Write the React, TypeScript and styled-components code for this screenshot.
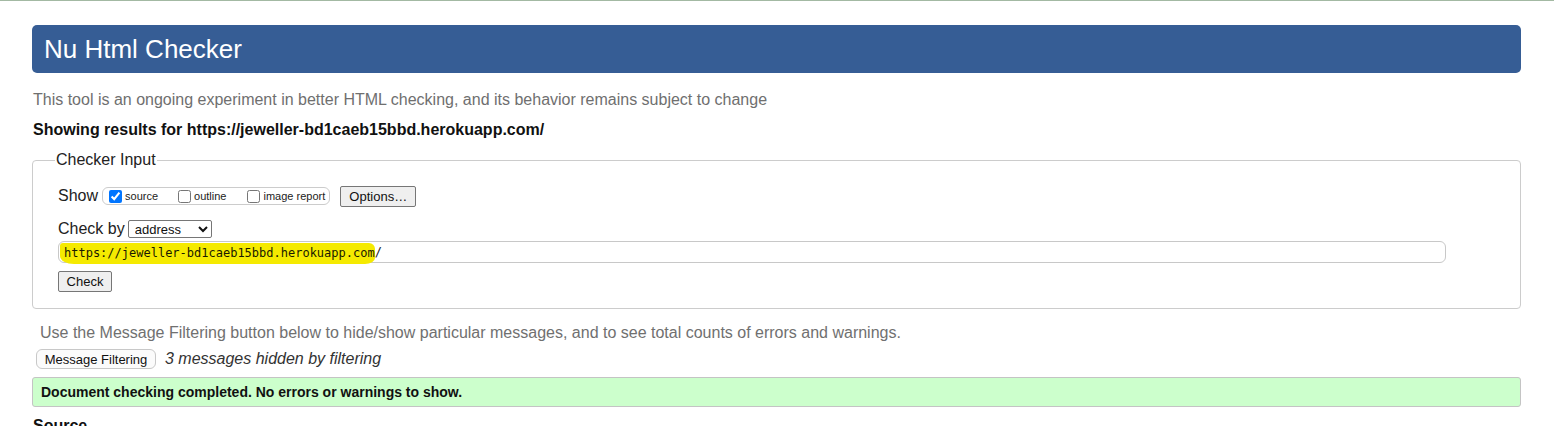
import React from "react";
import styled, { createGlobalStyle } from "styled-components";

const Global = createGlobalStyle`
  html, body { margin: 0; padding: 0; background: #fff; }
  body { font-family: "Liberation Sans", Arial, sans-serif; color: #000; overflow: hidden; }
`;

const TopRule = styled.div`
  height: 1px;
  background: #a3b9a3;
`;

const Page = styled.div`
  width: 1489px;
  margin: 0 0 0 32px;
  padding-top: 24px;
`;

const Header = styled.h1`
  margin: 0;
  height: 48px;
  box-sizing: border-box;
  padding: 0 12px;
  display: flex;
  align-items: center;
  background: #365d95;
  border-radius: 5px;
  color: #fff;
  font-weight: normal;
  font-size: 26px;
`;

const Intro = styled.p`
  margin: 17px 0 0 1px;
  font-size: 16px;
  line-height: 20px;
  color: #6f6f6f;
`;

const Results = styled.p`
  margin: 10px 0 0 1px;
  font-size: 16px;
  font-weight: bold;
  line-height: 19px;
  color: #111;
`;

const Fieldset = styled.fieldset`
  margin: 12px 0 0 0;
  padding: 12px 25px 16px 25px;
  border: 1px solid #cccccc;
  border-radius: 4px;
  min-height: 0;
`;

const Legend = styled.legend`
  font-size: 16px;
  padding: 0 1px;
  margin-left: -3px;
  color: #222;
`;

const Row = styled.div`
  display: flex;
  align-items: center;
  font-size: 16px;
  color: #222;
`;

const ShowRow = styled(Row)`
  height: 22px;
  margin-top: 4px;
`;

const CheckRow = styled(Row)`
  height: 20px;
  margin-top: 12px;
`;

const OptionGroup = styled.span`
  display: inline-flex;
  align-items: center;
  height: 18px;
  box-sizing: border-box;
  margin-left: 4px;
  padding: 0 4px 0 5px;
  border: 1px solid #cccccc;
  border-radius: 6px;
`;

const Opt = styled.label<{ $gap: number }>`
  display: inline-flex;
  align-items: center;
  font-size: 11px;
  color: #222;
  margin-right: ${(p) => p.$gap}px;
  input {
    width: 13px;
    height: 13px;
    margin: 0 3px 0 1px;
    accent-color: #0075ff;
  }
`;

const NativeButton = styled.button`
  font-family: "Liberation Sans", Arial, sans-serif;
  font-size: 13px;
  color: #111;
  background: #efefef;
  border: 1px solid #767676;
  border-radius: 2px;
  padding: 0 6px;
  height: 21px;
`;

const OptionsButton = styled(NativeButton)`
  margin-left: 10px;
  width: 76px;
`;

const Select = styled.select`
  margin-left: 3px;
  width: 84px;
  height: 18px;
  font-family: "Liberation Sans", Arial, sans-serif;
  font-size: 13px;
  color: #111;
  border: 1px solid #767676;
  border-radius: 2px;
  padding: 0 0 0 2px;
  background: #fff;
`;

const UrlBox = styled.div`
  margin-top: 2px;
  width: 1388px;
  height: 22px;
  box-sizing: border-box;
  border: 1px solid #c8c8c8;
  border-radius: 6px;
  display: flex;
  align-items: center;
  padding-left: 1px;
  font-family: "DejaVu Sans Mono", "Liberation Mono", monospace;
  font-size: 12px;
  color: #222;
`;

const Marker = styled.span`
  background: #f5ea00;
  padding: 3px 0 4px 4px;
  margin-top: 3px;
  border-radius: 3px 6px 10px 14px / 3px 6px 6px 8px;
  color: #1a1a00;
`;

const CheckButton = styled(NativeButton)`
  margin-top: 8px;
  width: 54px;
  display: block;
`;

const Note = styled.p`
  margin: 14px 0 0 8px;
  font-size: 16px;
  line-height: 20px;
  color: #707070;
`;

const FilterRow = styled.div`
  display: flex;
  align-items: center;
  margin-top: 6px;
  margin-left: 4px;
`;

const FilterButton = styled.button`
  font-family: "Liberation Sans", Arial, sans-serif;
  font-size: 13px;
  color: #111;
  background: #fbfbfb;
  border: 1px solid #c8c8c8;
  border-radius: 6px;
  height: 20px;
  width: 120px;
  padding: 0;
`;

const Hidden = styled.em`
  margin-left: 9px;
  font-size: 16px;
  color: #333;
`;

const Success = styled.div`
  margin-top: 8px;
  height: 30px;
  box-sizing: border-box;
  display: flex;
  align-items: center;
  padding-left: 8px;
  background: #ccffcc;
  border: 1px solid #c4c4c4;
  border-radius: 3px;
  font-size: 14px;
  font-weight: bold;
  color: #111;
`;

const SourceHeading = styled.h2`
  margin: 10px 0 0 1px;
  font-size: 16px;
  font-weight: bold;
  color: #111;
`;

export default function App() {
  return (
    <>
      <Global />
      <TopRule />
      <Page>
        <Header>Nu Html Checker</Header>
        <Intro>
          This tool is an ongoing experiment in better HTML checking, and its behavior remains subject to change
        </Intro>
        <Results>Showing results for https://jeweller-bd1caeb15bbd.herokuapp.com/</Results>
        <Fieldset>
          <Legend>Checker Input</Legend>
          <ShowRow>
            Show
            <OptionGroup>
              <Opt $gap={19}>
                <input type="checkbox" defaultChecked />
                source
              </Opt>
              <Opt $gap={20}>
                <input type="checkbox" />
                outline
              </Opt>
              <Opt $gap={0}>
                <input type="checkbox" />
                image report
              </Opt>
            </OptionGroup>
            <OptionsButton>Options…</OptionsButton>
          </ShowRow>
          <CheckRow>
            Check by
            <Select defaultValue="address">
              <option value="address">address</option>
              <option value="file">file upload</option>
              <option value="text">text input</option>
            </Select>
          </CheckRow>
          <UrlBox>
            <Marker>https://jeweller-bd1caeb15bbd.herokuapp.com</Marker>/
          </UrlBox>
          <CheckButton>Check</CheckButton>
        </Fieldset>
        <Note>
          Use the Message Filtering button below to hide/show particular messages, and to see total counts of errors and warnings.
        </Note>
        <FilterRow>
          <FilterButton>Message Filtering</FilterButton>
          <Hidden>3 messages hidden by filtering</Hidden>
        </FilterRow>
        <Success>Document checking completed. No errors or warnings to show.</Success>
        <SourceHeading>Source</SourceHeading>
      </Page>
    </>
  );
}
